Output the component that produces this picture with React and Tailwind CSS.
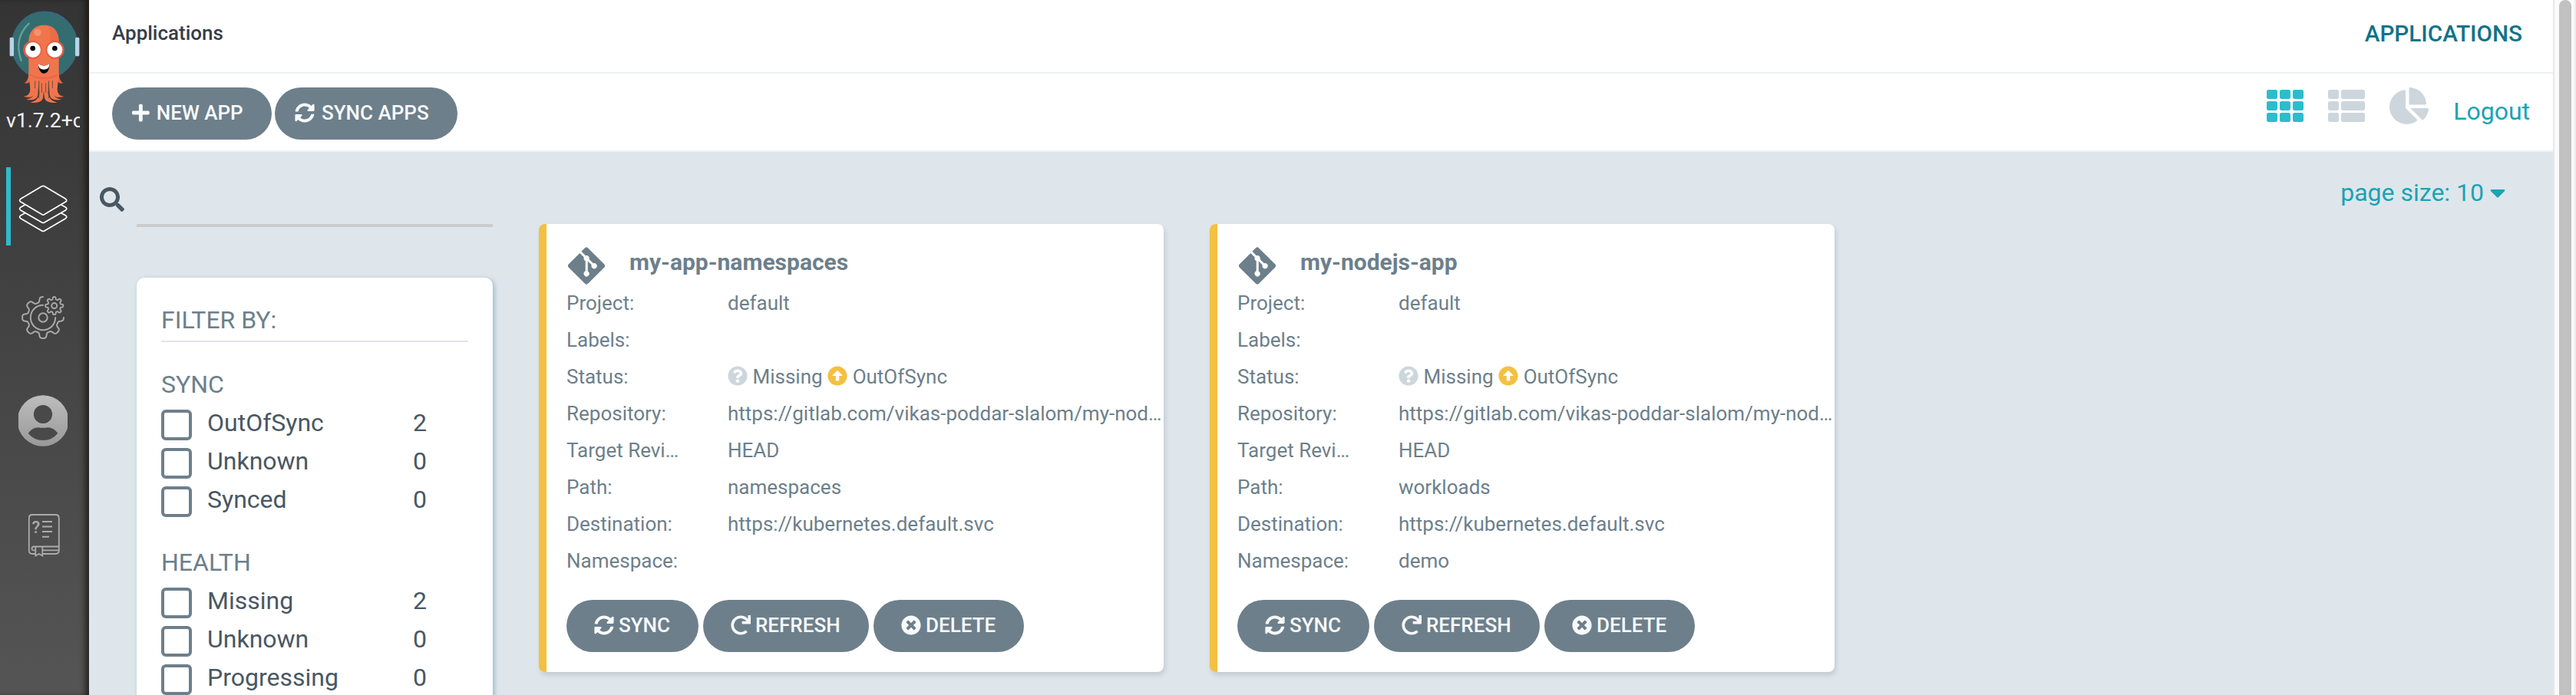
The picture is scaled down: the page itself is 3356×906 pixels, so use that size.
import {
  FaSyncAlt,
  FaRedo,
  FaPlus,
  FaSearch,
  FaTimesCircle,
  FaQuestionCircle,
  FaArrowAltCircleUp,
  FaGitAlt,
  FaTh,
  FaThList,
  FaChartPie,
  FaCaretDown,
} from "react-icons/fa";

const FILTERS = [
  { title: "SYNC", rows: [["OutOfSync", 2], ["Unknown", 0], ["Synced", 0]] },
  { title: "HEALTH", rows: [["Missing", 2], ["Unknown", 0], ["Progressing", 0]] },
];

const APPS = [
  { name: "my-app-namespaces", path: "namespaces", namespace: "" },
  { name: "my-nodejs-app", path: "workloads", namespace: "demo" },
];

// Rounded gear contour as a polyline, angles in degrees.
function gearPath(cx, cy, radius, depth, teeth, from, to) {
  const points = [];
  for (let a = from; a <= to; a += 1.5) {
    const t = (a * Math.PI) / 180;
    const r = radius + depth * Math.tanh(2.2 * Math.cos(teeth * t));
    points.push((cx + r * Math.cos(t)).toFixed(2) + " " + (cy + r * Math.sin(t)).toFixed(2));
  }
  return "M" + points.join("L");
}

const BIG_GEAR = gearPath(56, 414, 23.6, 3.4, 8, 0, 270);
const SMALL_GEAR = gearPath(70.7, 398.6, 10, 1.6, 8, 0, 360);

function Tentacles() {
  return (
    <g fill="#f0754d">
      <path d="M112 290Q110 317 95 324Q112 331 122 312Z" fill="#ea6248" />
      <path d="M112 285L118 348Q119 374 91 378Q128 386 134 368L139 305Z" />
      <path d="M133 305L134 362Q132 384 102 389Q142 397 148 372L152 305Z" />
      <path d="M150 305L154 366Q150 394 118 401Q160 406 168 384L172 345V300Z" />
    </g>
  );
}

function Logo() {
  return (
    <svg viewBox="0 0 348 420" className="block h-[140px] w-[116px] shrink-0">
      <ellipse cx="174" cy="176" rx="127" ry="130" fill="#336d70" stroke="#3b6680" strokeWidth="5" />
      <rect x="38" y="146" width="16" height="74" rx="5" fill="#b9d2e9" />
      <rect x="294" y="146" width="16" height="74" rx="5" fill="#b9d2e9" />
      <path d="M113 92Q52 150 83 237" fill="none" stroke="#6a9e9b" strokeWidth="7" strokeLinecap="round" />
      <Tentacles />
      <g transform="matrix(-1 0 0 1 342 0)">
        <Tentacles />
      </g>
      <path d="M112 316V160C112 121 138 98 171 98C205 98 230 121 230 160V316Q171 322 112 316Z" fill="#f0754d" />
      <path d="M184 99C200 120 200 145 192 165H230C230 122 208 102 184 99Z" fill="#eb6c47" />
      <path d="M112 290Q171 322 230 290" fill="none" stroke="#ea6848" strokeWidth="7" />
      <path d="M137 316V345M152 316V385M163 325V362M179 325V362M190 316V385M205 316V345" stroke="#5a443c" strokeWidth="2.500" fill="none" />
      <ellipse cx="147" cy="127" rx="14" ry="14" fill="#f4936f" />
      <circle cx="127" cy="195" r="36" fill="#e65a45" />
      <circle cx="215" cy="195" r="36" fill="#e65a45" />
      <circle cx="129" cy="195" r="30" fill="#fff" />
      <circle cx="214" cy="195" r="30" fill="#fff" />
      <circle cx="128" cy="189" r="10" fill="#000" />
      <circle cx="214" cy="189" r="10" fill="#000" />
      <path d="M149 249Q171 266 194 249Q192 287 171 287Q152 287 149 249Z" fill="#000" />
      <path d="M149 249Q171 266 194 249Q192 262 188 267Q171 277 155 267Q150 260 149 249Z" fill="#fff" />
    </svg>
  );
}

function Sidebar() {
  return (
    <aside className="flex w-[116px] shrink-0 flex-col bg-linear-to-b from-[#343434] to-[#555555] shadow-[inset_-7px_0_7px_-2px_rgba(20,12,8,0.65)]">
      <Logo />
      <div className="h-[78px] w-[104px] overflow-hidden whitespace-nowrap pl-2 text-[26.6px] leading-[34px] text-[#f2f5f6]">v1.7.2+c</div>
      <div className="flex h-[102px]">
        <div className="ml-2 w-1.5 bg-[#2dbccd]" />
        <svg viewBox="14 218 102 102" className="block h-[102px] w-[102px]" fill="none" stroke="#fff" strokeWidth="1.700" strokeLinejoin="round">
          <path d="M54.600 242.800Q56.200 242 57.800 242.800L85.600 259.300Q88 261.200 85.600 263.100L57.800 279.600Q56.200 280.800 54.600 279.600L26.800 263.100Q24.400 261.200 26.800 259.300Z" />
          <path d="M33 266.800L26.800 270.200Q24.400 272 26.800 273.900L54.600 290Q56.200 291 57.800 290L85.600 273.900Q88 272 85.600 270.200L79.400 266.800" />
          <path d="M33 277.500L26.800 281Q24.400 282.800 26.800 284.700L54.600 301Q56.200 302 57.800 301L85.600 284.700Q88 282.800 85.600 281L79.400 277.500" />
        </svg>
      </div>
      <svg viewBox="0 320 116 160" className="block h-[160px] w-[116px] shrink-0" fill="none" stroke="#a9a9a9" strokeWidth="2" strokeLinecap="round" strokeLinejoin="round">
        <path d={BIG_GEAR} />
        <path d={SMALL_GEAR} strokeWidth="1.900" />
        <path d="M72.200 414A16.200 16.200 0 1 1 56 397.800" />
        <circle cx="56" cy="414" r="5.700" />
        <circle cx="70.700" cy="398.600" r="3.500" />
      </svg>
      <svg viewBox="0 480 116 140" className="block h-[140px] w-[116px] shrink-0">
        <defs>
          <linearGradient id="user-fill" x1="0" y1="0" x2="0" y2="1">
            <stop offset="0" stopColor="#bdbdbd" />
            <stop offset="1" stopColor="#999999" />
          </linearGradient>
          <clipPath id="user-clip">
            <rect x="24" y="515" width="64" height="67" />
          </clipPath>
        </defs>
        <circle cx="56" cy="548.500" r="33.300" fill="url(#user-fill)" clipPath="url(#user-clip)" />
        <circle cx="56" cy="540" r="12.100" fill="#494949" />
        <path d="M36.700 564.700Q42 557 50 557.200Q56 558.400 62 557.200Q70 557 75.300 564.700Q68 574 56 574Q44 574 36.700 564.700Z" fill="#494949" />
      </svg>
      <svg viewBox="0 620 116 140" className="block h-[140px] w-[116px] shrink-0" fill="none" stroke="#ababab" strokeWidth="1.800">
        <path d="M46 722H42Q37.800 722 37.800 717.500V675.500Q37.800 671 42 671H72.500Q76.800 671 76.800 675.500V717.500Q76.800 722 72.500 722H56" />
        <path d="M76 712.500H44Q41.500 712.500 41.500 715T44 717.300H46M56 717.300H76" />
        <path d="M46.300 712.500V724.500L50.800 722L55.300 724.500V712.500" />
        <path d="M55 680H68M55 686.400H68M55 693H68M55 699.800H64" strokeWidth="2" />
        <text x="41.500" y="695" fill="#ababab" stroke="none" fontSize="22" fontWeight="500">?</text>
      </svg>
    </aside>
  );
}

function ActionButton({ icon: Icon, label, className, iconClass = "w-[26px]" }) {
  return (
    <button className={"flex h-[68px] items-center rounded-full bg-[#6d7f8b] pb-[3px] text-[26px] font-medium text-[#f8fbfc] " + className}>
      <Icon className={"h-[26px] shrink-0 " + iconClass} />
      <span className="whitespace-nowrap leading-[32px]">{label}</span>
    </button>
  );
}

function Row({ label, children }) {
  return (
    <div className="flex h-12 leading-[48px] whitespace-nowrap">
      <div className="w-[210px] shrink-0">{label}</div>
      <div className="flex items-center">{children}</div>
    </div>
  );
}

function AppCard({ app }) {
  return (
    <article className="h-[584px] w-[814px] shrink-0 rounded-lg border-l-10 border-[#f4c041] bg-white pl-[26px] text-[26px] text-[#6d7f8b] shadow-[2px_4px_6px_rgba(0,0,0,0.12)]">
      <div className="flex h-[79px] items-start">
        <FaGitAlt className="mt-[27px] ml-0.5 h-[55px] w-12 shrink-0" />
        <h2 className="ml-8 text-[30px] leading-[99px] font-bold">{app.name}</h2>
      </div>
      <Row label="Project:">default</Row>
      <Row label="Labels:" />
      <Row label="Status:">
        <FaQuestionCircle className="mb-0.5 text-[#cdd6dd]" />
        <span className="ml-[6.5px]">Missing</span>
        <FaArrowAltCircleUp className="mb-0.5 ml-[6.5px] text-[#f4c041]" />
        <span className="ml-[6.5px]">OutOfSync</span>
      </Row>
      <Row label="Repository:">https://gitlab.com/vikas-poddar-slalom/my-nod…</Row>
      <Row label="Target Revi…">HEAD</Row>
      <Row label="Path:">{app.path}</Row>
      <Row label="Destination:">https://kubernetes.default.svc</Row>
      <Row label="Namespace:">{app.namespace}</Row>
      <div className="mt-[27px] flex gap-1.5">
        <ActionButton icon={FaSyncAlt} label="SYNC" className="w-[172px] gap-1.5 pl-9" />
        <ActionButton icon={FaRedo} label="REFRESH" className="w-[216px] gap-1.5 pl-9" />
        <ActionButton icon={FaTimesCircle} label="DELETE" className="w-[196px] gap-1.5 pl-9" />
      </div>
    </article>
  );
}

function Filters() {
  return (
    <section className="ml-12 grow rounded-t-[10px] bg-white px-8 pt-[35px] text-[32px] shadow-[2px_2px_6px_#9db6c1]">
      <div className="mb-[35px] border-b-2 border-[#dee6eb] pb-[7px] leading-10 text-[#6d7f8b]">FILTER BY:</div>
      {FILTERS.map((group) => (
        <div key={group.title} className="mb-[34px]">
          <div className="h-12 leading-10 text-[#6d7f8b]">{group.title}</div>
          {group.rows.map(([label, count]) => (
            <div key={label} className="flex h-[50px] items-center text-[#495763]">
              <span className="h-10 w-10 shrink-0 rounded-md border-4 border-[#6d7f8b]" />
              <span className="ml-5 w-[268px] pb-[6px] leading-10">{label}</span>
              <span className="pb-[6px] leading-10">{count}</span>
            </div>
          ))}
        </div>
      ))}
    </section>
  );
}

export default function App() {
  return (
    <div className="flex h-[906px] w-[3356px] overflow-hidden bg-[#dee6ec]" style={{ fontFamily: "Roboto, sans-serif" }}>
      <Sidebar />
      <main className="flex w-[3210px] shrink-0 flex-col">
        <header className="flex h-24 shrink-0 items-start justify-between border-b-2 border-[#edf2f5] bg-white pr-10 pl-[30px] font-medium">
          <h1 className="text-[26px] leading-[86px] text-[#363c4a]">Applications</h1>
          <div className="text-[29.7px] leading-[88px] text-[#0f738a]">APPLICATIONS</div>
        </header>
        <div className="flex h-[102px] shrink-0 items-start border-b-2 border-[#edf2f5] bg-white pt-[18px] pl-[30px]">
          <ActionButton icon={FaPlus} label="NEW APP" className="w-[208px] gap-[9px] pl-[26px]" iconClass="w-[22.75px]" />
          <ActionButton icon={FaSyncAlt} label="SYNC APPS" className="ml-1 w-[238px] gap-[9px] pl-[26px]" />
          <div className="ml-auto flex items-start gap-8 pr-[30px] text-[48px] text-[#cdd6dd]">
            <FaTh className="text-[#2dbccd]" />
            <FaThList />
            <FaChartPie className="w-[51px]" />
            <a className="text-[32px] leading-[62px] text-[#1aa3b5]">Logout</a>
          </div>
        </div>
        <div className="flex min-h-0 flex-1 items-stretch">
          <div className="flex w-[526px] shrink-0 flex-col pl-[14px]">
            <div className="mb-[66px] flex h-[98px] shrink-0">
              <FaSearch className="mt-[46px] h-8 w-8 shrink-0 text-[#495763]" />
              <div className="ml-4 flex-1 border-b-4 border-[#cccbcc]" />
            </div>
            <Filters />
          </div>
          <div className="ml-[60px] flex gap-[60px] pt-[94px]">
            {APPS.map((app) => (
              <AppCard key={app.name} app={app} />
            ))}
          </div>
          <div className="mt-[33px] mr-[62px] ml-auto flex h-10 items-center gap-2 text-[32px] text-[#1aa3b5]">
            <span className="leading-10">page size: 10</span>
            <FaCaretDown className="w-5" />
          </div>
        </div>
      </main>
      <div className="flex w-[30px] shrink-0 border-l-2 border-r-2 border-l-[#e7e7e7] border-r-[#ececec] bg-[#fafafa] pl-1.5">
        <div className="h-[930px] w-4 rounded-t-full bg-[#c1c1c1]" />
      </div>
    </div>
  );
}
